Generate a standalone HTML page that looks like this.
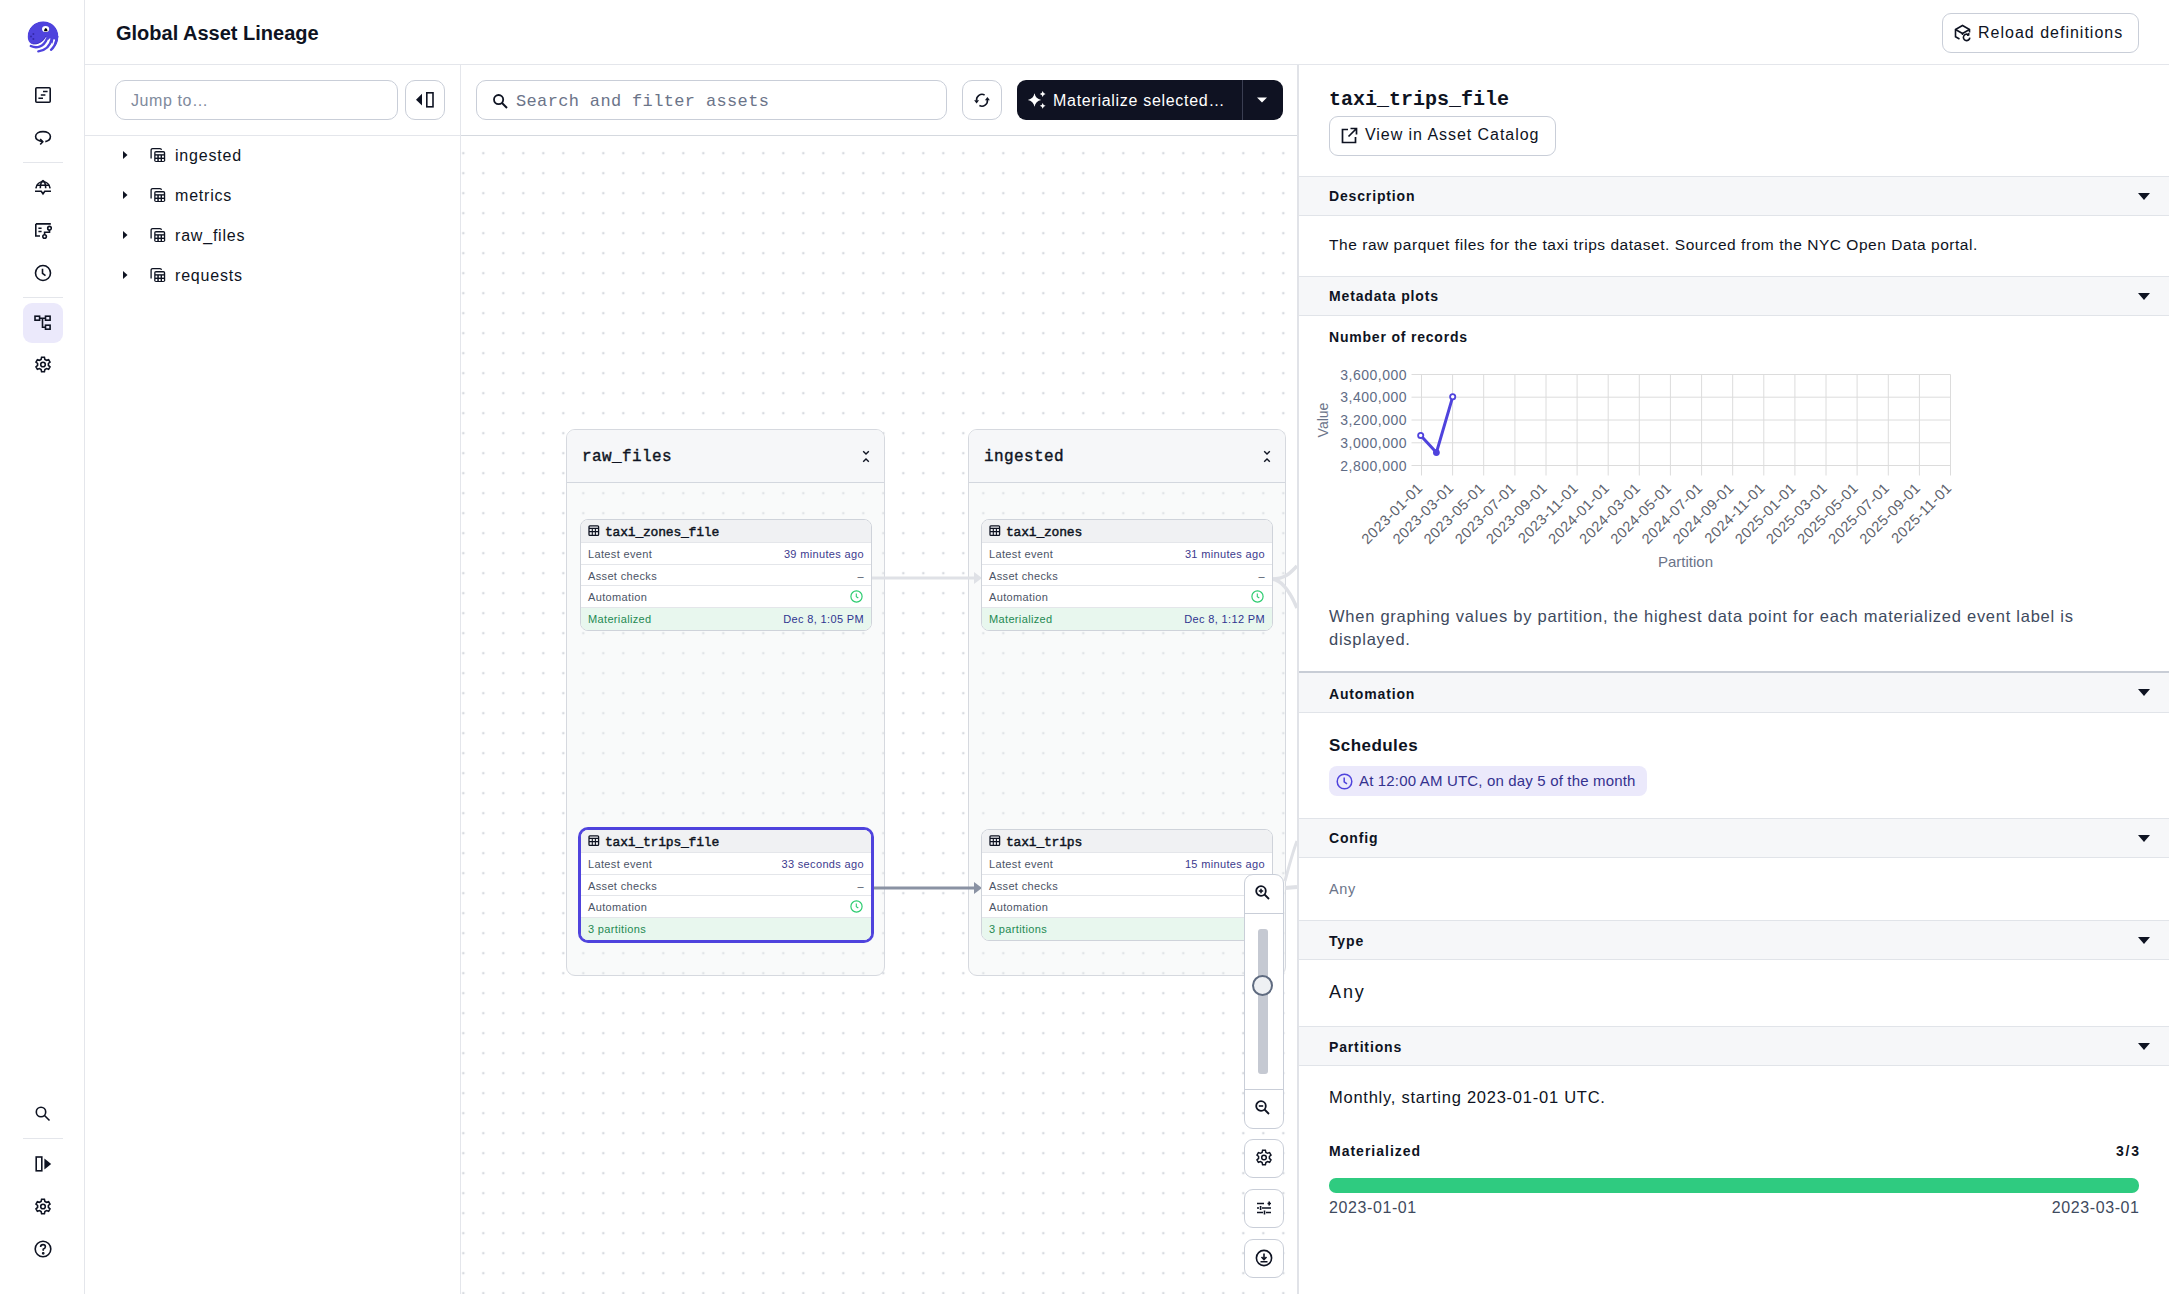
<!DOCTYPE html>
<html><head><meta charset="utf-8">
<style>
*{box-sizing:border-box;margin:0;padding:0}
html,body{width:2169px;height:1294px;overflow:hidden;background:#fff;font-family:"Liberation Sans",sans-serif;color:#0e1322}
.abs{position:absolute}
.hl{position:absolute;height:1px;background:#e4e6eb}
.vl{position:absolute;width:1px;background:#e4e6eb}
.btn{position:absolute;border:1px solid #c9ced8;border-radius:9px;background:#fff}
svg{display:block}
.ic{position:absolute;fill:none;stroke:#0e1322;stroke-width:1.6}
.mono{font-family:"Liberation Mono",monospace}
/* graph */
#graph{position:absolute;left:461px;top:136px;width:836px;height:1158px;overflow:hidden;
 background-color:#fff;
 background-image:radial-gradient(circle,#d5d8dd 0,#d9dce1 0.9px,transparent 1.7px);
 background-size:20px 20px;background-position:-7.7px 7.2px}
.grp{position:absolute;border:1px solid #d6d9df;border-radius:9px;background:rgba(240,243,243,0.4);overflow:hidden}
.grp .gh{position:absolute;left:0;top:0;right:0;height:53px;background:#f6f7f9;border-bottom:1px solid #d3d7de}
.grp .gt{position:absolute;left:15px;top:18px;font-family:"Liberation Mono",monospace;font-size:16px;font-weight:400;color:#0e1322;-webkit-text-stroke:0.4px #0e1322;letter-spacing:0.4px}
.node{position:absolute;width:292px;height:112px;border:1px solid #cfd3da;border-radius:8px;background:#fff;overflow:hidden}
.node .nh{position:absolute;left:0;top:0;right:0;height:22px;background:#f0f1f3}
.node .nt{position:absolute;left:24px;top:5px;font-family:"Liberation Mono",monospace;font-weight:400;font-size:13px;letter-spacing:-0.2px;color:#0e1322;-webkit-text-stroke:0.45px #0e1322}
.node .row{position:absolute;left:0;right:0;height:22px;border-top:1px solid #e4e6ea;font-size:11px;letter-spacing:0.35px;color:#4b5466}
.node .row .l{position:absolute;left:7px;top:5px}
.node .row .r{position:absolute;right:7px;top:5px;color:#3c3a8e}
.node .row.g{background:#e8f7ee;color:#248a52}
/* right panel */
#rp{position:absolute;left:1299px;top:65px;width:870px;height:1229px;background:#fff}
.sh{position:absolute;left:1299px;right:0;height:40px;background:#f6f7f9;border-top:1px solid #e1e4e9;border-bottom:1px solid #e1e4e9}
.sh .t{position:absolute;left:30px;top:11px;font-size:14px;font-weight:700;letter-spacing:0.85px;color:#0e1322}
.sh .car{position:absolute;right:19px;top:16px;width:0;height:0;border-left:6px solid transparent;border-right:6px solid transparent;border-top:7px solid #0e1322}
</style></head><body>

<!-- LEFT NAV -->
<!-- logo -->
<svg class="abs" style="left:24px;top:18px" width="38" height="38" viewBox="0 0 38 38">
 <defs><clipPath id="lc"><path d="M19.2 3.2 C28 3.2 34.5 10 34.5 18.5 C34.5 27 28 33.8 19.5 33.8 L4 30 L3.5 18.5 C3.5 10 10.5 3.2 19.2 3.2 Z"/></clipPath></defs>
 <g clip-path="url(#lc)">
 <path d="M19.2 3.2 C28 3.2 34.5 10 34.5 18.5 C34.5 23 33.5 26 31.5 29 L22 19 C19 24.5 14 26.8 9 26.3 C5.5 25.5 3.6 22 3.6 18.5 C3.6 10 10.5 3.2 19.2 3.2 Z" fill="#4f43dd"/>
 </g>
 <path d="M15.5 31.6 C21 30.8 24.8 27.5 26.3 20.5" stroke="#fff" stroke-width="1.8" fill="none"/>
 <path d="M25.6 31 C28.4 28.6 29.8 25.6 30.3 21.3" stroke="#fff" stroke-width="1.8" fill="none"/>
 <path d="M6.8 28 C12 30.6 19.5 29.6 23 20.8" stroke="#4f43dd" stroke-width="2.4" stroke-linecap="round" fill="none"/>
 <path d="M14.3 33.4 C21 32.6 26.2 28.2 27.8 20.6" stroke="#4f43dd" stroke-width="2.4" stroke-linecap="round" fill="none"/>
 <path d="M27 31.8 C30 29.2 31.8 26 32.5 21.5" stroke="#4f43dd" stroke-width="2.4" stroke-linecap="round" fill="none"/>
 <path d="M22.5 19.3 C26 18 30.5 18.2 34 20" stroke="#4f43dd" stroke-width="3.2" fill="none"/>
 <path d="M9 25.8 C14 26.5 19 23.5 21.8 18" stroke="#3329a8" stroke-width="0.9" fill="none" opacity="0.5"/>
 <ellipse cx="21.6" cy="11" rx="3.6" ry="3.1" fill="#fff"/>
 <path d="M19.9 13.2 Q20.4 10.2 21.8 10 Q23.2 10.2 23.6 13.2 Z" fill="#000"/>
 <circle cx="9.4" cy="15.9" r="1" fill="#3329a8"/><circle cx="7" cy="18.5" r="1" fill="#3329a8"/><circle cx="9.4" cy="20.9" r="1" fill="#3329a8"/>
</svg>
<!-- nav icons -->
<svg class="ic" style="left:35px;top:87px" width="16" height="16" viewBox="0 0 16 16"><rect x="0.8" y="0.8" width="14.4" height="14.4" rx="1"/><path d="M8 4.6h4.6M5.8 8h4.6M3.4 11.3h4.6" stroke-width="1.5"/></svg>
<svg class="ic" style="left:34px;top:130px" width="18" height="17" viewBox="0 0 18 17"><path d="M8.6 11.6 C4.2 11 1.6 8.8 1.6 6.6 C1.6 3.4 5 1.6 9 1.6 C13 1.6 16.4 3.4 16.4 6.6 C16.4 9.3 14 11.2 11.3 11.6"/><path d="M6.2 9 L8.8 11.7 L6.2 14.5"/></svg>
<div class="hl" style="left:23px;top:162px;width:40px"></div>
<svg class="ic" style="left:34px;top:179px" width="18" height="17" viewBox="0 0 18 17"><path d="M1.9 9.3 A7.2 7.9 0 0 1 16.1 9.3"/><path d="M6.3 9.3 C6.3 5 7.4 2.6 9 1.4 M11.7 9.3 C11.7 5 10.6 2.6 9 1.4 M2.6 6.3 H15.4"/><path d="M1 12.2 H7.2 L9 14.8 L10.8 12.2 H17"/></svg>
<svg class="ic" style="left:35px;top:222px" width="17" height="17" viewBox="0 0 17 17"><path d="M0.8 1.9 H15.8 M0.8 1.9 V14 H5"/><path d="M3.4 6.2 H6.6 M3.4 9.5 H6.6"/><circle cx="14.5" cy="6.2" r="1.8"/><circle cx="9.6" cy="14.6" r="1.8"/><path d="M9.6 12.8 V10.3 H14.5 V8"/></svg>
<svg class="ic" style="left:34px;top:264px" width="18" height="18" viewBox="0 0 18 18"><circle cx="9" cy="9" r="7.5"/><path d="M8.5 4.8v4.5l3 2.4"/></svg>
<div class="hl" style="left:23px;top:297px;width:40px"></div>
<div class="abs" style="left:23px;top:303px;width:40px;height:40px;border-radius:9px;background:#ebe9fb"></div>
<svg class="ic" style="left:34px;top:314px" width="18" height="18" viewBox="0 0 18 18"><rect x="1" y="2.2" width="4.6" height="4" /><rect x="11.5" y="2.2" width="4.6" height="4"/><rect x="11.5" y="11.2" width="4.6" height="4"/><path d="M5.6 4.2h5.9M8.5 4.2v9h3"/></svg>
<svg class="ic" style="left:34px;top:356px" width="18" height="18" viewBox="0 0 18 18"><path d="M7.6 1.2h2.8l.5 2.2 1.6.9 2.1-.7 1.4 2.4-1.6 1.5v1.9l1.6 1.5-1.4 2.4-2.1-.7-1.6.9-.5 2.2H7.6l-.5-2.2-1.6-.9-2.1.7-1.4-2.4 1.6-1.5V7.5L2 6l1.4-2.4 2.1.7 1.6-.9z"/><circle cx="9" cy="8.5" r="2.3"/></svg>
<!-- bottom nav -->
<svg class="ic" style="left:35px;top:1106px" width="16" height="16" viewBox="0 0 16 16"><circle cx="6" cy="6" r="4.7"/><path d="M9.5 9.5 L14.5 14.5"/></svg>
<div class="hl" style="left:23px;top:1138px;width:40px"></div>
<svg class="abs" style="left:35px;top:1156px" width="17" height="16" viewBox="0 0 17 16"><rect x="1.2" y="1" width="5.6" height="13.8" fill="none" stroke="#0e1322" stroke-width="1.6"/><path d="M9.4 2.4 L16.2 8 L9.4 13.6 Z" fill="#0e1322"/></svg>
<svg class="ic" style="left:34px;top:1198px" width="18" height="18" viewBox="0 0 18 18"><path d="M7.6 1.2h2.8l.5 2.2 1.6.9 2.1-.7 1.4 2.4-1.6 1.5v1.9l1.6 1.5-1.4 2.4-2.1-.7-1.6.9-.5 2.2H7.6l-.5-2.2-1.6-.9-2.1.7-1.4-2.4 1.6-1.5V7.5L2 6l1.4-2.4 2.1.7 1.6-.9z"/><circle cx="9" cy="8.5" r="2.3"/></svg>
<svg class="ic" style="left:34px;top:1240px" width="18" height="18" viewBox="0 0 18 18"><circle cx="9" cy="9" r="7.8"/><path d="M6.6 7 Q6.6 4.6 9 4.6 Q11.4 4.6 11.4 6.8 Q11.4 8.3 9.2 9.2 V10.8"/><circle cx="9.2" cy="13.3" r="0.6" fill="#0e1322"/></svg>

<div class="vl" style="left:84px;top:0;height:1294px"></div>

<!-- HEADER -->
<div class="hl" style="left:85px;top:64px;width:2084px"></div>
<div class="abs" style="left:116px;top:22px;font-size:20px;font-weight:700;color:#0e1322">Global Asset Lineage</div>
<div class="btn" style="left:1942px;top:13px;width:197px;height:40px"></div>
<svg class="ic" style="left:1954px;top:24px" width="18" height="18" viewBox="0 0 18 18"><path d="M5.5 15 L1.5 12.8 V5.5 L8.5 1.5 L15.5 5.5 V8.5"/><path d="M1.5 5.5 L8.5 9.5 L15.5 5.5 M8.5 9.5 V11"/><path d="M15.8 13.6 A3.2 3.2 0 1 1 14.5 10.8"/><path d="M14.9 9.2 L14.6 11 L12.9 11.2" /></svg>
<div class="abs" style="left:1978px;top:24px;font-size:16px;letter-spacing:1px">Reload definitions</div>

<!-- TREE PANEL -->
<div class="hl" style="left:85px;top:135px;width:375px"></div>
<div class="vl" style="left:460px;top:65px;height:1229px"></div>
<div class="btn" style="left:115px;top:80px;width:283px;height:40px;border-radius:10px"></div>
<div class="abs" style="left:131px;top:92px;font-size:16px;color:#808a9c;letter-spacing:0.6px">Jump to…</div>
<div class="btn" style="left:405px;top:80px;width:40px;height:40px;border-radius:10px"></div>


<svg class="abs" style="left:405px;top:80px" width="40" height="40" viewBox="0 0 40 40"><path d="M11 19.7 L17 13.8 V25.6 Z" fill="#0e1322"/><rect x="21.8" y="12.8" width="6.2" height="14" fill="none" stroke="#0e1322" stroke-width="1.6"/></svg>
<svg class="abs" style="left:122px;top:150px" width="6" height="10" viewBox="0 0 6 10"><path d="M1 1 L5.5 5 L1 9 Z" fill="#0e1322"/></svg>
<svg class="abs" style="left:150px;top:147px" width="16" height="16" viewBox="0 0 16 16"><path d="M1.1 11.6 V3.2 Q1.1 1.6 2.7 1.6 H10 Q11.3 1.6 11.5 2.8" fill="none" stroke="#0e1322" stroke-width="1.3"/><rect x="4.2" y="4" width="11" height="11" rx="1.8" fill="#0e1322"/><rect x="5.5" y="5.5" width="8.3" height="1.7" fill="#fff"/><rect x="5.5" y="8.6" width="1.8" height="2" fill="#fff"/><rect x="8.8" y="8.6" width="1.8" height="2" fill="#fff"/><rect x="12" y="8.6" width="1.9" height="2" fill="#fff"/><rect x="5.5" y="12" width="1.8" height="2" fill="#fff"/><rect x="8.8" y="12" width="1.8" height="2" fill="#fff"/><rect x="12" y="12" width="1.9" height="2" fill="#fff"/></svg>
<div class="abs" style="left:175px;top:147px;font-size:16px;letter-spacing:0.8px;color:#0e1322">ingested</div>
<svg class="abs" style="left:122px;top:190px" width="6" height="10" viewBox="0 0 6 10"><path d="M1 1 L5.5 5 L1 9 Z" fill="#0e1322"/></svg>
<svg class="abs" style="left:150px;top:187px" width="16" height="16" viewBox="0 0 16 16"><path d="M1.1 11.6 V3.2 Q1.1 1.6 2.7 1.6 H10 Q11.3 1.6 11.5 2.8" fill="none" stroke="#0e1322" stroke-width="1.3"/><rect x="4.2" y="4" width="11" height="11" rx="1.8" fill="#0e1322"/><rect x="5.5" y="5.5" width="8.3" height="1.7" fill="#fff"/><rect x="5.5" y="8.6" width="1.8" height="2" fill="#fff"/><rect x="8.8" y="8.6" width="1.8" height="2" fill="#fff"/><rect x="12" y="8.6" width="1.9" height="2" fill="#fff"/><rect x="5.5" y="12" width="1.8" height="2" fill="#fff"/><rect x="8.8" y="12" width="1.8" height="2" fill="#fff"/><rect x="12" y="12" width="1.9" height="2" fill="#fff"/></svg>
<div class="abs" style="left:175px;top:187px;font-size:16px;letter-spacing:0.8px;color:#0e1322">metrics</div>
<svg class="abs" style="left:122px;top:230px" width="6" height="10" viewBox="0 0 6 10"><path d="M1 1 L5.5 5 L1 9 Z" fill="#0e1322"/></svg>
<svg class="abs" style="left:150px;top:227px" width="16" height="16" viewBox="0 0 16 16"><path d="M1.1 11.6 V3.2 Q1.1 1.6 2.7 1.6 H10 Q11.3 1.6 11.5 2.8" fill="none" stroke="#0e1322" stroke-width="1.3"/><rect x="4.2" y="4" width="11" height="11" rx="1.8" fill="#0e1322"/><rect x="5.5" y="5.5" width="8.3" height="1.7" fill="#fff"/><rect x="5.5" y="8.6" width="1.8" height="2" fill="#fff"/><rect x="8.8" y="8.6" width="1.8" height="2" fill="#fff"/><rect x="12" y="8.6" width="1.9" height="2" fill="#fff"/><rect x="5.5" y="12" width="1.8" height="2" fill="#fff"/><rect x="8.8" y="12" width="1.8" height="2" fill="#fff"/><rect x="12" y="12" width="1.9" height="2" fill="#fff"/></svg>
<div class="abs" style="left:175px;top:227px;font-size:16px;letter-spacing:0.8px;color:#0e1322">raw_files</div>
<svg class="abs" style="left:122px;top:270px" width="6" height="10" viewBox="0 0 6 10"><path d="M1 1 L5.5 5 L1 9 Z" fill="#0e1322"/></svg>
<svg class="abs" style="left:150px;top:267px" width="16" height="16" viewBox="0 0 16 16"><path d="M1.1 11.6 V3.2 Q1.1 1.6 2.7 1.6 H10 Q11.3 1.6 11.5 2.8" fill="none" stroke="#0e1322" stroke-width="1.3"/><rect x="4.2" y="4" width="11" height="11" rx="1.8" fill="#0e1322"/><rect x="5.5" y="5.5" width="8.3" height="1.7" fill="#fff"/><rect x="5.5" y="8.6" width="1.8" height="2" fill="#fff"/><rect x="8.8" y="8.6" width="1.8" height="2" fill="#fff"/><rect x="12" y="8.6" width="1.9" height="2" fill="#fff"/><rect x="5.5" y="12" width="1.8" height="2" fill="#fff"/><rect x="8.8" y="12" width="1.8" height="2" fill="#fff"/><rect x="12" y="12" width="1.9" height="2" fill="#fff"/></svg>
<div class="abs" style="left:175px;top:267px;font-size:16px;letter-spacing:0.8px;color:#0e1322">requests</div>

<!-- GRAPH TOOLBAR -->
<div class="hl" style="left:461px;top:135px;width:836px;background:#d5d9df"></div><div class="abs" style="left:461px;top:136px;width:836px;height:2px;background:#eef0f2"></div>
<div class="btn" style="left:476px;top:80px;width:471px;height:40px;border-radius:10px"></div>
<div class="abs mono" style="left:516px;top:92px;font-size:17px;letter-spacing:0.35px;color:#6b7489">Search and filter assets</div>
<div class="btn" style="left:962px;top:80px;width:40px;height:40px;border-radius:10px"></div>
<div class="abs" style="left:1017px;top:80px;width:266px;height:40px;border-radius:9px;background:#0f1222"></div>
<div class="abs" style="left:1053px;top:92px;font-size:16px;color:#fff;letter-spacing:0.7px">Materialize selected…</div>

<svg class="ic" style="left:492px;top:93px" width="17" height="17" viewBox="0 0 17 17"><circle cx="6.6" cy="6.6" r="4.6" stroke-width="1.8"/><path d="M10 10 L15 15" stroke-width="1.9"/></svg>
<svg class="abs" style="left:973px;top:91px" width="18" height="18" viewBox="0 0 18 18"><path d="M11.6 4 A5.5 5.5 0 0 0 3.6 9.6" fill="none" stroke="#0e1322" stroke-width="1.6"/><path d="M1.1 9.3 L6.1 9.3 L3.6 12.4Z" fill="#0e1322"/><path d="M6.4 14.5 A5.5 5.5 0 0 0 14.4 8.9" fill="none" stroke="#0e1322" stroke-width="1.6"/><path d="M11.9 9.2 L16.9 9.2 L14.4 6.1Z" fill="#0e1322"/></svg>
<svg class="abs" style="left:1026px;top:89px" width="22" height="22" viewBox="0 0 22 22"><path d="M8.5 4.3 Q9.6 9.8 15.2 11 Q9.6 12.2 8.5 17.7 Q7.4 12.2 1.8 11 Q7.4 9.8 8.5 4.3Z" fill="#fff"/><path d="M16.7 2.1 Q17.2 4.5 19.6 5 Q17.2 5.5 16.7 7.9 Q16.2 5.5 13.8 5 Q16.2 4.5 16.7 2.1Z" fill="#fff"/><path d="M16.7 13.9 Q17.2 16.3 19.6 16.8 Q17.2 17.3 16.7 19.7 Q16.2 17.3 13.8 16.8 Q16.2 16.3 16.7 13.9Z" fill="#fff"/></svg>
<div class="abs" style="left:1242px;top:80px;width:1px;height:40px;background:#3a3e52"></div>
<svg class="abs" style="left:1256px;top:96px" width="12" height="8" viewBox="0 0 12 8"><path d="M1 1.5 H11 L6 6.5Z" fill="#fff"/></svg>
<div id="graph">
<div class="grp" style="left:105px;top:293px;width:319px;height:547px"><div class="gh"></div><div class="gt">raw_files</div>
 <svg class="abs" style="right:14px;top:20px" width="8" height="13" viewBox="0 0 8 13"><path d="M1.2 1.2 L4 4 L6.8 1.2 M1.2 11.8 L4 9 L6.8 11.8" fill="none" stroke="#0e1322" stroke-width="1.4"/></svg></div>
<div class="grp" style="left:507px;top:293px;width:318px;height:547px"><div class="gh"></div><div class="gt">ingested</div>
 <svg class="abs" style="right:14px;top:20px" width="8" height="13" viewBox="0 0 8 13"><path d="M1.2 1.2 L4 4 L6.8 1.2 M1.2 11.8 L4 9 L6.8 11.8" fill="none" stroke="#0e1322" stroke-width="1.4"/></svg></div>
<svg class="abs" style="left:0;top:0" width="836" height="1158">
 <path d="M410 442 H515" stroke="#dfe1e6" stroke-width="3" fill="none"/>
 <path d="M513 436 L521 442 L513 448 Z" fill="#dfe1e6"/>
 <path d="M410 752 H515" stroke="#8a92a3" stroke-width="3" fill="none"/>
 <path d="M513 746 L521 752 L513 758 Z" fill="#8a92a3"/>
 <path d="M811 443 C825 443 830 436 836 430" stroke="#dfe1e6" stroke-width="3.5" fill="none"/>
 <path d="M811 443 C822 444 830 458 836 472" stroke="#dfe1e6" stroke-width="3.5" fill="none"/>
 <path d="M824 745 C828 730 832 715 836 705" stroke="#dfe1e6" stroke-width="3" fill="none"/>
 <path d="M824 752 L836 751" stroke="#dfe1e6" stroke-width="4" fill="none"/>
</svg>
<div class="node" style="left:119px;top:383px;border:1px solid #cfd3da">
 <div class="nh"></div>
 <svg class="abs" style="left:7px;top:5px" width="12" height="12" viewBox="0 0 12 12"><rect x="1" y="0.9" width="9.6" height="9.5" rx="0.9" fill="none" stroke="#0e1322" stroke-width="1.3"/><path d="M1 3.4H10.6M1 6.6H10.6M4.3 3.4V10.4M7.4 3.4V10.4" stroke="#0e1322" stroke-width="1.1"/></svg>
 <div class="nt">taxi_zones_file</div>
 <div class="row" style="top:22px"><span class="l">Latest event</span><span class="r">39 minutes ago</span></div>
 <div class="row" style="top:44px"><span class="l">Asset checks</span><span class="r" style="color:#4b5466">–</span></div>
 <div class="row" style="top:65px"><span class="l">Automation</span><svg class="abs" style="right:8px;top:4px" width="13" height="13" viewBox="0 0 13 13"><circle cx="6.5" cy="6.5" r="5.6" fill="none" stroke="#2ecc71" stroke-width="1.2"/><path d="M6.3 3.5v3.2l2 1.3" fill="none" stroke="#2ecc71" stroke-width="1.1"/></svg></div>
 <div class="row g" style="top:87px;height:25px"><span class="l">Materialized</span><span class="r" style="color:#2f3590">Dec 8, 1:05 PM</span></div>
</div><div class="node" style="left:520px;top:383px;border:1px solid #cfd3da">
 <div class="nh"></div>
 <svg class="abs" style="left:7px;top:5px" width="12" height="12" viewBox="0 0 12 12"><rect x="1" y="0.9" width="9.6" height="9.5" rx="0.9" fill="none" stroke="#0e1322" stroke-width="1.3"/><path d="M1 3.4H10.6M1 6.6H10.6M4.3 3.4V10.4M7.4 3.4V10.4" stroke="#0e1322" stroke-width="1.1"/></svg>
 <div class="nt">taxi_zones</div>
 <div class="row" style="top:22px"><span class="l">Latest event</span><span class="r">31 minutes ago</span></div>
 <div class="row" style="top:44px"><span class="l">Asset checks</span><span class="r" style="color:#4b5466">–</span></div>
 <div class="row" style="top:65px"><span class="l">Automation</span><svg class="abs" style="right:8px;top:4px" width="13" height="13" viewBox="0 0 13 13"><circle cx="6.5" cy="6.5" r="5.6" fill="none" stroke="#2ecc71" stroke-width="1.2"/><path d="M6.3 3.5v3.2l2 1.3" fill="none" stroke="#2ecc71" stroke-width="1.1"/></svg></div>
 <div class="row g" style="top:87px;height:25px"><span class="l">Materialized</span><span class="r" style="color:#2f3590">Dec 8, 1:12 PM</span></div>
</div><div class="node" style="left:119px;top:693px;border:1px solid #4f43dd;box-shadow:0 0 0 2px #4f43dd">
 <div class="nh"></div>
 <svg class="abs" style="left:7px;top:5px" width="12" height="12" viewBox="0 0 12 12"><rect x="1" y="0.9" width="9.6" height="9.5" rx="0.9" fill="none" stroke="#0e1322" stroke-width="1.3"/><path d="M1 3.4H10.6M1 6.6H10.6M4.3 3.4V10.4M7.4 3.4V10.4" stroke="#0e1322" stroke-width="1.1"/></svg>
 <div class="nt">taxi_trips_file</div>
 <div class="row" style="top:22px"><span class="l">Latest event</span><span class="r">33 seconds ago</span></div>
 <div class="row" style="top:44px"><span class="l">Asset checks</span><span class="r" style="color:#4b5466">–</span></div>
 <div class="row" style="top:65px"><span class="l">Automation</span><svg class="abs" style="right:8px;top:4px" width="13" height="13" viewBox="0 0 13 13"><circle cx="6.5" cy="6.5" r="5.6" fill="none" stroke="#2ecc71" stroke-width="1.2"/><path d="M6.3 3.5v3.2l2 1.3" fill="none" stroke="#2ecc71" stroke-width="1.1"/></svg></div>
 <div class="row g" style="top:87px;height:25px"><span class="l">3 partitions</span></div>
</div><div class="node" style="left:520px;top:693px;border:1px solid #cfd3da">
 <div class="nh"></div>
 <svg class="abs" style="left:7px;top:5px" width="12" height="12" viewBox="0 0 12 12"><rect x="1" y="0.9" width="9.6" height="9.5" rx="0.9" fill="none" stroke="#0e1322" stroke-width="1.3"/><path d="M1 3.4H10.6M1 6.6H10.6M4.3 3.4V10.4M7.4 3.4V10.4" stroke="#0e1322" stroke-width="1.1"/></svg>
 <div class="nt">taxi_trips</div>
 <div class="row" style="top:22px"><span class="l">Latest event</span><span class="r">15 minutes ago</span></div>
 <div class="row" style="top:44px"><span class="l">Asset checks</span><span class="r" style="color:#4b5466">–</span></div>
 <div class="row" style="top:65px"><span class="l">Automation</span><svg class="abs" style="right:8px;top:4px" width="13" height="13" viewBox="0 0 13 13"><circle cx="6.5" cy="6.5" r="5.6" fill="none" stroke="#2ecc71" stroke-width="1.2"/><path d="M6.3 3.5v3.2l2 1.3" fill="none" stroke="#2ecc71" stroke-width="1.1"/></svg></div>
 <div class="row g" style="top:87px;height:25px"><span class="l">3 partitions</span></div>
</div>
<div class="abs" style="left:783px;top:738px;width:40px;height:255px;border:1px solid #c9ced8;border-radius:9px;background:#fff"></div>
<div class="abs" style="left:784px;top:777px;width:38px;height:1px;background:#c9ced8"></div>
<div class="abs" style="left:784px;top:953px;width:38px;height:1px;background:#c9ced8"></div>
<div class="abs" style="left:797px;top:793px;width:10px;height:145px;border-radius:3px;background:#c5c9d2"></div>
<div class="abs" style="left:791px;top:839px;width:21px;height:21px;border-radius:50%;background:#eef0f3;border:2px solid #5f6b80"></div>
<svg class="ic" style="left:793px;top:748px" width="18" height="18" viewBox="0 0 18 18"><circle cx="7" cy="7" r="4.8" stroke-width="1.8"/><path d="M10.5 10.5 L15 15" stroke-width="1.8"/><path d="M7 4.8V9.2M4.8 7H9.2" stroke-width="1.5"/></svg>
<svg class="ic" style="left:793px;top:963px" width="18" height="18" viewBox="0 0 18 18"><circle cx="7" cy="7" r="4.8" stroke-width="1.8"/><path d="M10.5 10.5 L15 15" stroke-width="1.8"/><path d="M4.8 7H9.2" stroke-width="1.6"/></svg>
<div class="abs" style="left:783px;top:1003px;width:40px;height:39px;border:1px solid #c9ced8;border-radius:9px;background:#fff"></div>
<svg class="ic" style="left:794px;top:1013px" width="18" height="18" viewBox="0 0 18 18"><path d="M7.6 1.2h2.8l.5 2.2 1.6.9 2.1-.7 1.4 2.4-1.6 1.5v1.9l1.6 1.5-1.4 2.4-2.1-.7-1.6.9-.5 2.2H7.6l-.5-2.2-1.6-.9-2.1.7-1.4-2.4 1.6-1.5V7.5L2 6l1.4-2.4 2.1.7 1.6-.9z" stroke-width="1.5"/><circle cx="9" cy="8.5" r="2.3" stroke-width="1.5"/></svg>
<div class="abs" style="left:783px;top:1053px;width:40px;height:39px;border:1px solid #c9ced8;border-radius:9px;background:#fff"></div>
<svg class="ic" style="left:794px;top:1063px" width="18" height="18" viewBox="0 0 18 18"><path d="M2 4.5H9M12.5 4.5H16M14.2 2.6V6.4M2 9H4M7 9H16M5.6 7.1V10.9M2 13.5H8M11 13.5H16M9.5 11.6V15.4" stroke-width="1.6"/></svg>
<div class="abs" style="left:783px;top:1103px;width:40px;height:39px;border:1px solid #c9ced8;border-radius:9px;background:#fff"></div>
<svg class="ic" style="left:794px;top:1113px" width="18" height="18" viewBox="0 0 18 18"><circle cx="9" cy="9" r="7.6" stroke-width="1.6"/><path d="M9 4.5V10.5M6.5 8 L9 10.5 L11.5 8M5.5 12.8H12.5" stroke-width="1.6"/></svg>
</div>

<div class="vl" style="left:1297px;top:65px;width:2px;height:1229px;background:#e1e3e8"></div>

<!-- RIGHT PANEL -->
<div id="rp"></div>
<div class="abs mono" style="left:1329px;top:88px;font-size:20px;font-weight:700;color:#0e1322">taxi_trips_file</div>
<div class="btn" style="left:1329px;top:116px;width:227px;height:40px"></div>
<svg class="ic" style="left:1341px;top:127px" width="17" height="17" viewBox="0 0 17 17"><path d="M7 2.5H1.5V15.5H14.5V10" stroke-width="1.7"/><path d="M9.5 1.5H15.5V7.5M15.5 1.5 L7.5 9.5" stroke-width="1.7"/></svg>
<div class="abs" style="left:1365px;top:126px;font-size:16px;letter-spacing:0.95px;color:#0e1322">View in Asset Catalog</div>

<div class="sh" style="top:176px"><div class="t">Description</div><div class="car"></div></div>
<div class="abs" style="left:1329px;top:236px;font-size:15.5px;letter-spacing:0.54px;color:#0e1322">The raw parquet files for the taxi trips dataset. Sourced from the NYC Open Data portal.</div>

<div class="sh" style="top:276px"><div class="t">Metadata plots</div><div class="car"></div></div>
<div class="abs" style="left:1329px;top:329px;font-size:14px;font-weight:700;letter-spacing:0.8px;color:#0e1322">Number of records</div>
<svg class="abs" style="left:0;top:0" width="2169" height="1294"><path d="M1421.5 374.5 V475.5" stroke="#dcdcdc" stroke-width="1"/><path d="M1452.6 374.5 V475.5" stroke="#dcdcdc" stroke-width="1"/><path d="M1483.7 374.5 V475.5" stroke="#dcdcdc" stroke-width="1"/><path d="M1514.9 374.5 V475.5" stroke="#dcdcdc" stroke-width="1"/><path d="M1546.0 374.5 V475.5" stroke="#dcdcdc" stroke-width="1"/><path d="M1577.1 374.5 V475.5" stroke="#dcdcdc" stroke-width="1"/><path d="M1608.2 374.5 V475.5" stroke="#dcdcdc" stroke-width="1"/><path d="M1639.3 374.5 V475.5" stroke="#dcdcdc" stroke-width="1"/><path d="M1670.4 374.5 V475.5" stroke="#dcdcdc" stroke-width="1"/><path d="M1701.6 374.5 V475.5" stroke="#dcdcdc" stroke-width="1"/><path d="M1732.7 374.5 V475.5" stroke="#dcdcdc" stroke-width="1"/><path d="M1763.8 374.5 V475.5" stroke="#dcdcdc" stroke-width="1"/><path d="M1794.9 374.5 V475.5" stroke="#dcdcdc" stroke-width="1"/><path d="M1826.0 374.5 V475.5" stroke="#dcdcdc" stroke-width="1"/><path d="M1857.1 374.5 V475.5" stroke="#dcdcdc" stroke-width="1"/><path d="M1888.3 374.5 V475.5" stroke="#dcdcdc" stroke-width="1"/><path d="M1919.4 374.5 V475.5" stroke="#dcdcdc" stroke-width="1"/><path d="M1950.5 374.5 V475.5" stroke="#dcdcdc" stroke-width="1"/><path d="M1411.5 374.5 H1950.5" stroke="#dcdcdc" stroke-width="1"/><text x="1407" y="379.5" text-anchor="end" font-family="Liberation Sans" font-size="14" letter-spacing="0.5" fill="#5f6c85">3,600,000</text><path d="M1411.5 397.2 H1950.5" stroke="#dcdcdc" stroke-width="1"/><text x="1407" y="402.2" text-anchor="end" font-family="Liberation Sans" font-size="14" letter-spacing="0.5" fill="#5f6c85">3,400,000</text><path d="M1411.5 420.0 H1950.5" stroke="#dcdcdc" stroke-width="1"/><text x="1407" y="425.0" text-anchor="end" font-family="Liberation Sans" font-size="14" letter-spacing="0.5" fill="#5f6c85">3,200,000</text><path d="M1411.5 442.8 H1950.5" stroke="#dcdcdc" stroke-width="1"/><text x="1407" y="447.8" text-anchor="end" font-family="Liberation Sans" font-size="14" letter-spacing="0.5" fill="#5f6c85">3,000,000</text><path d="M1411.5 465.5 H1950.5" stroke="#dcdcdc" stroke-width="1"/><text x="1407" y="470.5" text-anchor="end" font-family="Liberation Sans" font-size="14" letter-spacing="0.5" fill="#5f6c85">2,800,000</text><text transform="translate(1423.5,489) rotate(-45)" text-anchor="end" font-family="Liberation Sans" font-size="14.6" letter-spacing="0.45" fill="#5d626c">2023-01-01</text><text transform="translate(1454.6,489) rotate(-45)" text-anchor="end" font-family="Liberation Sans" font-size="14.6" letter-spacing="0.45" fill="#5d626c">2023-03-01</text><text transform="translate(1485.7,489) rotate(-45)" text-anchor="end" font-family="Liberation Sans" font-size="14.6" letter-spacing="0.45" fill="#5d626c">2023-05-01</text><text transform="translate(1516.9,489) rotate(-45)" text-anchor="end" font-family="Liberation Sans" font-size="14.6" letter-spacing="0.45" fill="#5d626c">2023-07-01</text><text transform="translate(1548.0,489) rotate(-45)" text-anchor="end" font-family="Liberation Sans" font-size="14.6" letter-spacing="0.45" fill="#5d626c">2023-09-01</text><text transform="translate(1579.1,489) rotate(-45)" text-anchor="end" font-family="Liberation Sans" font-size="14.6" letter-spacing="0.45" fill="#5d626c">2023-11-01</text><text transform="translate(1610.2,489) rotate(-45)" text-anchor="end" font-family="Liberation Sans" font-size="14.6" letter-spacing="0.45" fill="#5d626c">2024-01-01</text><text transform="translate(1641.3,489) rotate(-45)" text-anchor="end" font-family="Liberation Sans" font-size="14.6" letter-spacing="0.45" fill="#5d626c">2024-03-01</text><text transform="translate(1672.4,489) rotate(-45)" text-anchor="end" font-family="Liberation Sans" font-size="14.6" letter-spacing="0.45" fill="#5d626c">2024-05-01</text><text transform="translate(1703.6,489) rotate(-45)" text-anchor="end" font-family="Liberation Sans" font-size="14.6" letter-spacing="0.45" fill="#5d626c">2024-07-01</text><text transform="translate(1734.7,489) rotate(-45)" text-anchor="end" font-family="Liberation Sans" font-size="14.6" letter-spacing="0.45" fill="#5d626c">2024-09-01</text><text transform="translate(1765.8,489) rotate(-45)" text-anchor="end" font-family="Liberation Sans" font-size="14.6" letter-spacing="0.45" fill="#5d626c">2024-11-01</text><text transform="translate(1796.9,489) rotate(-45)" text-anchor="end" font-family="Liberation Sans" font-size="14.6" letter-spacing="0.45" fill="#5d626c">2025-01-01</text><text transform="translate(1828.0,489) rotate(-45)" text-anchor="end" font-family="Liberation Sans" font-size="14.6" letter-spacing="0.45" fill="#5d626c">2025-03-01</text><text transform="translate(1859.1,489) rotate(-45)" text-anchor="end" font-family="Liberation Sans" font-size="14.6" letter-spacing="0.45" fill="#5d626c">2025-05-01</text><text transform="translate(1890.3,489) rotate(-45)" text-anchor="end" font-family="Liberation Sans" font-size="14.6" letter-spacing="0.45" fill="#5d626c">2025-07-01</text><text transform="translate(1921.4,489) rotate(-45)" text-anchor="end" font-family="Liberation Sans" font-size="14.6" letter-spacing="0.45" fill="#5d626c">2025-09-01</text><text transform="translate(1952.5,489) rotate(-45)" text-anchor="end" font-family="Liberation Sans" font-size="14.6" letter-spacing="0.45" fill="#5d626c">2025-11-01</text><text transform="translate(1328,420) rotate(-90)" text-anchor="middle" font-family="Liberation Sans" font-size="14" fill="#6b7489">Value</text><text x="1685.5" y="567" text-anchor="middle" font-family="Liberation Sans" font-size="15" fill="#6b7489">Partition</text><path d="M1420.7 435.4 L1436.4 452.6 L1452.7 396.8" stroke="#4f43dd" stroke-width="3" fill="none" stroke-linejoin="round"/><circle cx="1420.7" cy="435.4" r="2.6" fill="#fff" stroke="#4f43dd" stroke-width="1.8"/><circle cx="1436.4" cy="452.6" r="3.4" fill="#4f43dd"/><circle cx="1452.7" cy="396.8" r="2.6" fill="#fff" stroke="#4f43dd" stroke-width="1.8"/></svg>
<div class="abs" style="left:1329px;top:605px;width:800px;font-size:16.5px;line-height:23px;letter-spacing:0.74px;color:#3e4a5e">When graphing values by partition, the highest data point for each materialized event label is displayed.</div>

<div class="sh" style="top:671px;height:42px;border-top:2px solid #c8cdd6"><div class="t" style="top:13px">Automation</div><div class="car"></div></div>
<div class="abs" style="left:1329px;top:736px;font-size:17px;font-weight:700;letter-spacing:0.45px;color:#0e1322">Schedules</div>
<div class="abs" style="left:1329px;top:766px;width:318px;height:30px;border-radius:8px;background:#ebe9fb"></div>
<svg class="abs" style="left:1336px;top:773px" width="17" height="17" viewBox="0 0 17 17"><circle cx="8.5" cy="8.5" r="7.3" fill="none" stroke="#4f43dd" stroke-width="1.5"/><path d="M8.2 4.5V8.8L11 10.8" fill="none" stroke="#4f43dd" stroke-width="1.5"/></svg>
<div class="abs" style="left:1359px;top:772px;font-size:15px;letter-spacing:0.17px;color:#34318f">At 12:00 AM UTC, on day 5 of the month</div>

<div class="sh" style="top:818px"><div class="t">Config</div><div class="car"></div></div>
<div class="abs" style="left:1329px;top:881px;font-size:14.5px;letter-spacing:0.6px;color:#6b7489">Any</div>

<div class="sh" style="top:920px"><div class="t" style="top:12px">Type</div><div class="car"></div></div>
<div class="abs" style="left:1329px;top:982px;font-size:18px;letter-spacing:1.9px;color:#0e1322">Any</div>

<div class="sh" style="top:1026px"><div class="t" style="top:12px">Partitions</div><div class="car"></div></div>
<div class="abs" style="left:1329px;top:1088px;font-size:16.5px;letter-spacing:0.75px;color:#0e1322">Monthly, starting 2023-01-01 UTC.</div>
<div class="abs" style="left:1329px;top:1143px;font-size:14px;font-weight:700;letter-spacing:1px;color:#0e1322">Materialized</div>
<div class="abs" style="right:30px;top:1143px;font-size:14px;font-weight:700;letter-spacing:1.8px;margin-right:-1.8px;color:#0e1322">3/3</div>
<div class="abs" style="left:1329px;top:1178px;width:810px;height:15px;border-radius:7px;background:#2fcb80"></div>
<div class="abs" style="left:1329px;top:1199px;font-size:16px;letter-spacing:0.6px;color:#3e4a5e">2023-01-01</div>
<div class="abs" style="right:30px;top:1199px;font-size:16px;letter-spacing:0.6px;margin-right:-0.6px;color:#3e4a5e">2023-03-01</div>


</body></html>
